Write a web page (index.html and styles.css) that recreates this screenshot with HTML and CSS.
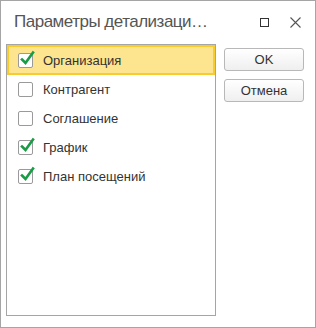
FILE: index.html
```html
<!DOCTYPE html>
<html lang="ru">
<head>
    <meta charset="UTF-8">
    <meta name="viewport" content="width=device-width, initial-scale=1.0">
    <title>Параметры детализации</title>
    <link rel="stylesheet" href="styles.css">
</head>
<body>
    <div class="window">
        <div class="title-bar">
            <span class="title">Параметры детализаци…</span>
            <div class="controls">
                <button class="ctl maximize">
                    <svg width="9" height="9" viewBox="0 0 9 9"><rect x="0.5" y="0.5" width="8" height="8" fill="none" stroke="#333" stroke-width="1"/></svg>
                </button>
                <button class="ctl close">
                    <svg width="11" height="11" viewBox="0 0 11 11"><path d="M0.5 0.5L10.5 10.5M10.5 0.5L0.5 10.5" stroke="#555" stroke-width="1.1"/></svg>
                </button>
            </div>
        </div>
        <div class="content">
            <div class="list">
                <div class="row selected">
                    <span class="check checked"></span>
                    <span class="label">Организация</span>
                </div>
                <div class="row">
                    <span class="check"></span>
                    <span class="label">Контрагент</span>
                </div>
                <div class="row">
                    <span class="check"></span>
                    <span class="label">Соглашение</span>
                </div>
                <div class="row">
                    <span class="check checked"></span>
                    <span class="label">График</span>
                </div>
                <div class="row">
                    <span class="check checked"></span>
                    <span class="label">План посещений</span>
                </div>
            </div>
            <div class="actions">
                <button class="btn">OK</button>
                <button class="btn">Отмена</button>
            </div>
        </div>
    </div>

    <script>
        // put the green tick into every checked box
        const tick = '<svg width="16" height="17" viewBox="0 0 16 17"><path d="M3 9.5L6.5 13L14 2.5" fill="none" stroke="#1a9b45" stroke-width="2.6" stroke-linecap="square"/></svg>';
        document.querySelectorAll('.check.checked').forEach(el => {
            el.innerHTML = tick;
        });
    </script>
</body>
</html>
```
FILE: styles.css
```css
    body {
        margin: 0;
        padding: 0;
        background-color: #ffffff;
        font-family: "Liberation Sans", Arial, sans-serif;
    }

    .window {
        width: 316px;
        height: 328px;
        box-sizing: border-box;
        border: 1px solid #a5a5a5;
        background-color: #ffffff;
        display: flex;
        flex-direction: column;
    }

    .title-bar {
        height: 43px;
        display: flex;
        align-items: center;
        padding-left: 13px;
        padding-right: 14px;
    }

    .title {
        font-size: 17px;
        letter-spacing: -0.5px;
        color: #555555;
        white-space: nowrap;
        padding-bottom: 1px;
    }

    .controls {
        display: flex;
        align-items: center;
        gap: 21px;
        margin-left: auto;
    }

    .ctl {
        border: none;
        background: none;
        padding: 0;
        display: flex;
        align-items: center;
        justify-content: center;
    }

    .content {
        display: flex;
        padding-left: 5px;
    }

    .list {
        width: 210px;
        height: 272px;
        box-sizing: border-box;
        border: 1px solid #a5a5a5;
    }

    .row {
        height: 29px;
        display: flex;
        align-items: center;
        padding-left: 9px;
        box-sizing: border-box;
        border: 2px solid transparent;
    }

    .row.selected {
        height: 30px;
        background-color: #fde48e;
        border-color: #f8cb2e;
    }

    .check {
        position: relative;
        width: 15px;
        height: 15px;
        box-sizing: border-box;
        border: 1px solid #9a9a9a;
        border-radius: 2px;
        background-color: #ffffff;
        flex-shrink: 0;
    }

    .check svg {
        position: absolute;
        left: 0px;
        top: -4px;
    }

    .label {
        margin-left: 10px;
        font-size: 13px;
        color: #333333;
    }

    .actions {
        display: flex;
        flex-direction: column;
        gap: 8px;
        margin-left: 8px;
        padding-top: 4px;
    }

    .btn {
        width: 80px;
        height: 23px;
        box-sizing: border-box;
        border: 1px solid #b8b8b8;
        border-radius: 3px;
        background: linear-gradient(#ffffff, #efefef);
        font-family: "Liberation Sans", Arial, sans-serif;
        font-size: 13px;
        color: #333333;
        padding: 0;
    }
```
